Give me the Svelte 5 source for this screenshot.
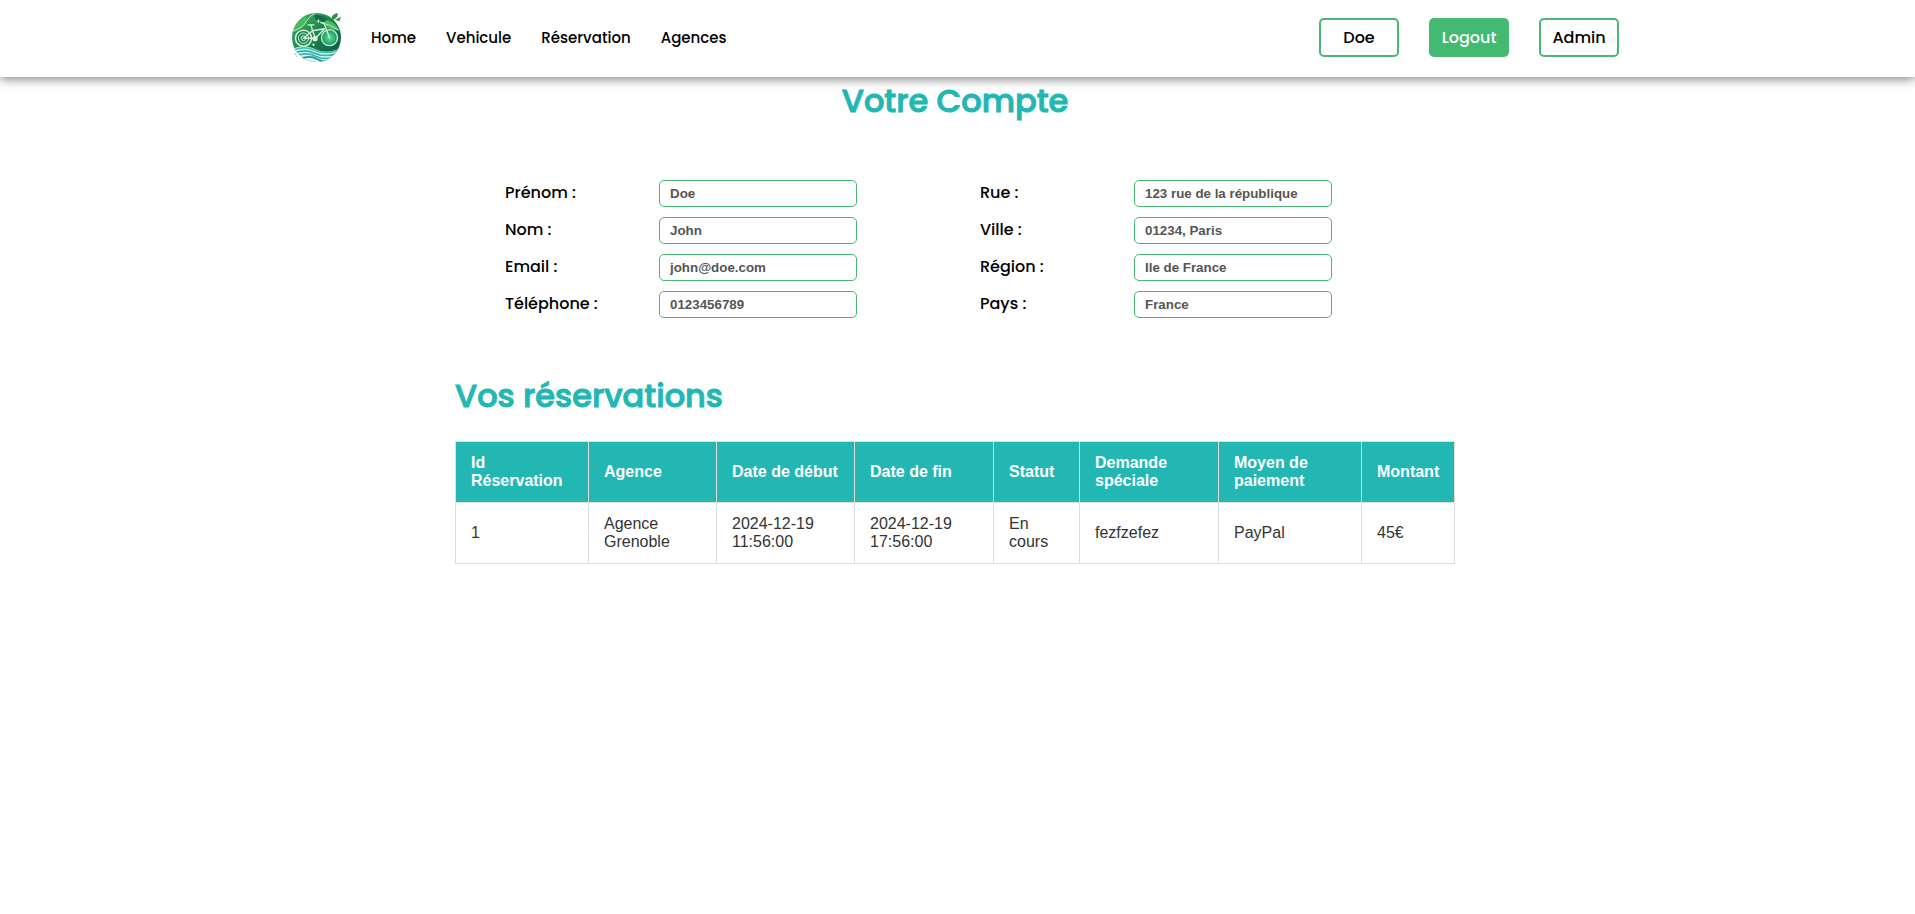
<script>
  const links = ['Home', 'Vehicule', 'Réservation', 'Agences'];
  const groups = [
    [
      { label: 'Prénom :', value: 'Doe' },
      { label: 'Nom :', value: 'John' },
      { label: 'Email :', value: 'john@doe.com' },
      { label: 'Téléphone :', value: '0123456789' }
    ],
    [
      { label: 'Rue :', value: '123 rue de la république' },
      { label: 'Ville :', value: '01234, Paris' },
      { label: 'Région :', value: 'Ile de France' },
      { label: 'Pays :', value: 'France' }
    ]
  ];
  const columns = [
    { title: 'Id Réservation', width: 133 },
    { title: 'Agence', width: 128 },
    { title: 'Date de début', width: 138 },
    { title: 'Date de fin', width: 139 },
    { title: 'Statut', width: 86 },
    { title: 'Demande spéciale', width: 139 },
    { title: 'Moyen de paiement', width: 143 },
    { title: 'Montant', width: 93 }
  ];
  const bookings = [
    ['1', 'Agence Grenoble', '2024-12-19 11:56:00', '2024-12-19 17:56:00', 'En cours', 'fezfzefez', 'PayPal', '45€']
  ];
</script>

<header>
  <nav>
    <svg class="logo" viewBox="-0.5 0.8 50 50" aria-hidden="true">
      <defs>
        <clipPath id="disc"><circle cx="25" cy="25.3" r="24.5" /></clipPath>
        <linearGradient id="leafy" x1="0" y1="0" x2="1" y2="1">
          <stop offset="0" stop-color="#4bb864" />
          <stop offset=".45" stop-color="#1d8550" />
          <stop offset="1" stop-color="#075243" />
        </linearGradient>
        <radialGradient id="hub">
          <stop offset="0" stop-color="#2f9f6a" />
          <stop offset="1" stop-color="#117650" />
        </radialGradient>
        <radialGradient id="glow">
          <stop offset="0" stop-color="#5fe592" />
          <stop offset="1" stop-color="#159266" />
        </radialGradient>
      </defs>
      <g clip-path="url(#disc)">
        <rect width="50" height="50" fill="url(#leafy)" />
        <path d="M2 20Q3 10 14 4Q19 12 2 20M30 9Q40 5 48 18Q34 18 30 9" fill="#4bbb62" />
        <path d="M22 3Q30 2 36 7L30 12Q24 9 22 3" fill="#126d47" />
        <path d="M1 19Q12 16 15 9Q17 4 24 1M29 10Q38 12 47 18" fill="none" stroke="#b4ecb0" stroke-width="1" />
        <circle cx="12" cy="26" r="8" fill="url(#hub)" />
        <circle cx="38" cy="25.5" r="8" fill="url(#glow)" />
        <path d="M0 37Q12 31 24 37T50 35V50H0Z" fill="#d6f7ee" />
        <g fill="none" stroke-width="1.6">
          <path d="M0 39Q11 33 23 38T50 37" stroke="#3cc4a8" />
          <path d="M1 42Q12 36 23 41T50 40" stroke="#2fb0a8" />
          <path d="M2 45Q13 39 24 44T49 43" stroke="#35b5b6" />
          <path d="M7 48Q16 42 26 47T46 46" stroke="#1f949c" />
        </g>
      </g>
      <g fill="none" stroke="#d3efd5" stroke-linecap="round" stroke-linejoin="round">
        <circle cx="12" cy="26" r="8" stroke-width="1.5" />
        <circle cx="12" cy="26" r="5.2" stroke-width="1" />
        <circle cx="12" cy="26" r="2.4" stroke-width=".9" />
        <circle cx="38" cy="25.5" r="8" stroke-width="1.3" />
        <path d="M12 26H23M12 26L21 18.5L24 26L33 16.5L21 18.5L19.5 13M16.5 12.7H22.5M38 25.5L32.5 11L29.5 10.5" stroke-width="1.4" />
      </g>
      <circle cx="23.5" cy="26.5" r="2.6" fill="#e3f6df" />
      <path d="M40 7Q40 2 46 .8Q47.5 4.5 42 7.5M43.5 7.5L49.500 4.500L48 9Z" fill="#29914b" />
      <path d="M27 7v4M25 9h4M22 31v3M20.5 32.5h3" stroke="#d6f5bd" stroke-width=".9" />
      <path d="M3 42h2M5 44h1" stroke="#4cc6b6" stroke-width="1" />
    </svg>
    <ul>
      {#each links as link}
        <li>{link}</li>
      {/each}
    </ul>
    <div class="actions">
      <button>Doe</button>
      <button class="filled">Logout</button>
      <button>Admin</button>
    </div>
  </nav>
</header>

<main>
  <h1>Votre Compte</h1>
  <form>
    {#each groups as group}
      <div class="group">
        {#each group as field}
          <label><span>{field.label}</span><input value={field.value} readonly /></label>
        {/each}
      </div>
    {/each}
  </form>
  <section>
    <h2>Vos réservations</h2>
    <table>
      <colgroup>
        {#each columns as column}<col style:width="{column.width}px" />{/each}
      </colgroup>
      <thead>
        <tr>{#each columns as column}<th>{column.title}</th>{/each}</tr>
      </thead>
      <tbody>
        {#each bookings as booking}
          <tr>{#each booking as cell}<td>{cell}</td>{/each}</tr>
        {/each}
      </tbody>
    </table>
  </section>
</main>

<style>
  :global(body) {
    background: #fff;
    font-family: Poppins, Inter, sans-serif;
  }
  header {
    position: relative;
    height: 77px;
    background: #fff;
    box-shadow: 0 2px 10px rgba(0, 0, 0, 0.5);
  }
  nav {
    box-sizing: border-box;
    display: flex;
    align-items: center;
    height: 75px;
    padding: 0 296px 0 291px;
  }
  .logo {
    width: 50px;
    height: 50px;
  }
  ul {
    display: flex;
    gap: 30px;
    margin: 0 0 0 30px;
    padding: 0;
    list-style: none;
    font-size: 15px;
    font-weight: 500;
    white-space: nowrap;
  }
  .actions {
    display: flex;
    gap: 30px;
    margin-left: auto;
  }
  button {
    width: 80px;
    height: 39px;
    padding: 0;
    border: 2px solid #43b972;
    border-radius: 5px;
    background: #fff;
    color: #000;
    font: 500 16px Poppins, Inter, sans-serif;
  }
  .filled {
    background: #43b972;
    color: #fff;
  }
  main {
    width: 1910px;
  }
  h1,
  h2 {
    color: #22b7b3;
    font-size: 32px;
    font-weight: 500;
    line-height: 48px;
    -webkit-text-stroke: 1px #22b7b3;
  }
  h1 {
    margin: 0;
    text-align: center;
  }
  form {
    display: flex;
    gap: 123px;
    margin: 55px 0 0 505px;
  }
  .group {
    display: grid;
    gap: 10px;
    width: 352px;
  }
  label {
    display: flex;
    justify-content: space-between;
    height: 27px;
    font-size: 16px;
    font-weight: 500;
    line-height: 25px;
  }
  input {
    box-sizing: border-box;
    width: 198px;
    height: 27px;
    padding: 0 10px;
    border: 1px solid #43b972;
    border-radius: 5px;
    color: #555;
    font: bold 13.333px 'Liberation Sans', Arial, sans-serif;
  }
  section {
    width: 1000px;
    margin: 54px auto 0;
  }
  h2 {
    margin: 0 0 21px;
  }
  table {
    width: 1000px;
    table-layout: fixed;
    border-collapse: collapse;
    color: #333;
    font: 16px 'Liberation Sans', Arial, sans-serif;
  }
  th,
  td {
    padding: 12px 15px;
    border: 1px solid #ddd;
    text-align: left;
  }
  th {
    background: #22b7b3;
    color: #fff;
  }
</style>
